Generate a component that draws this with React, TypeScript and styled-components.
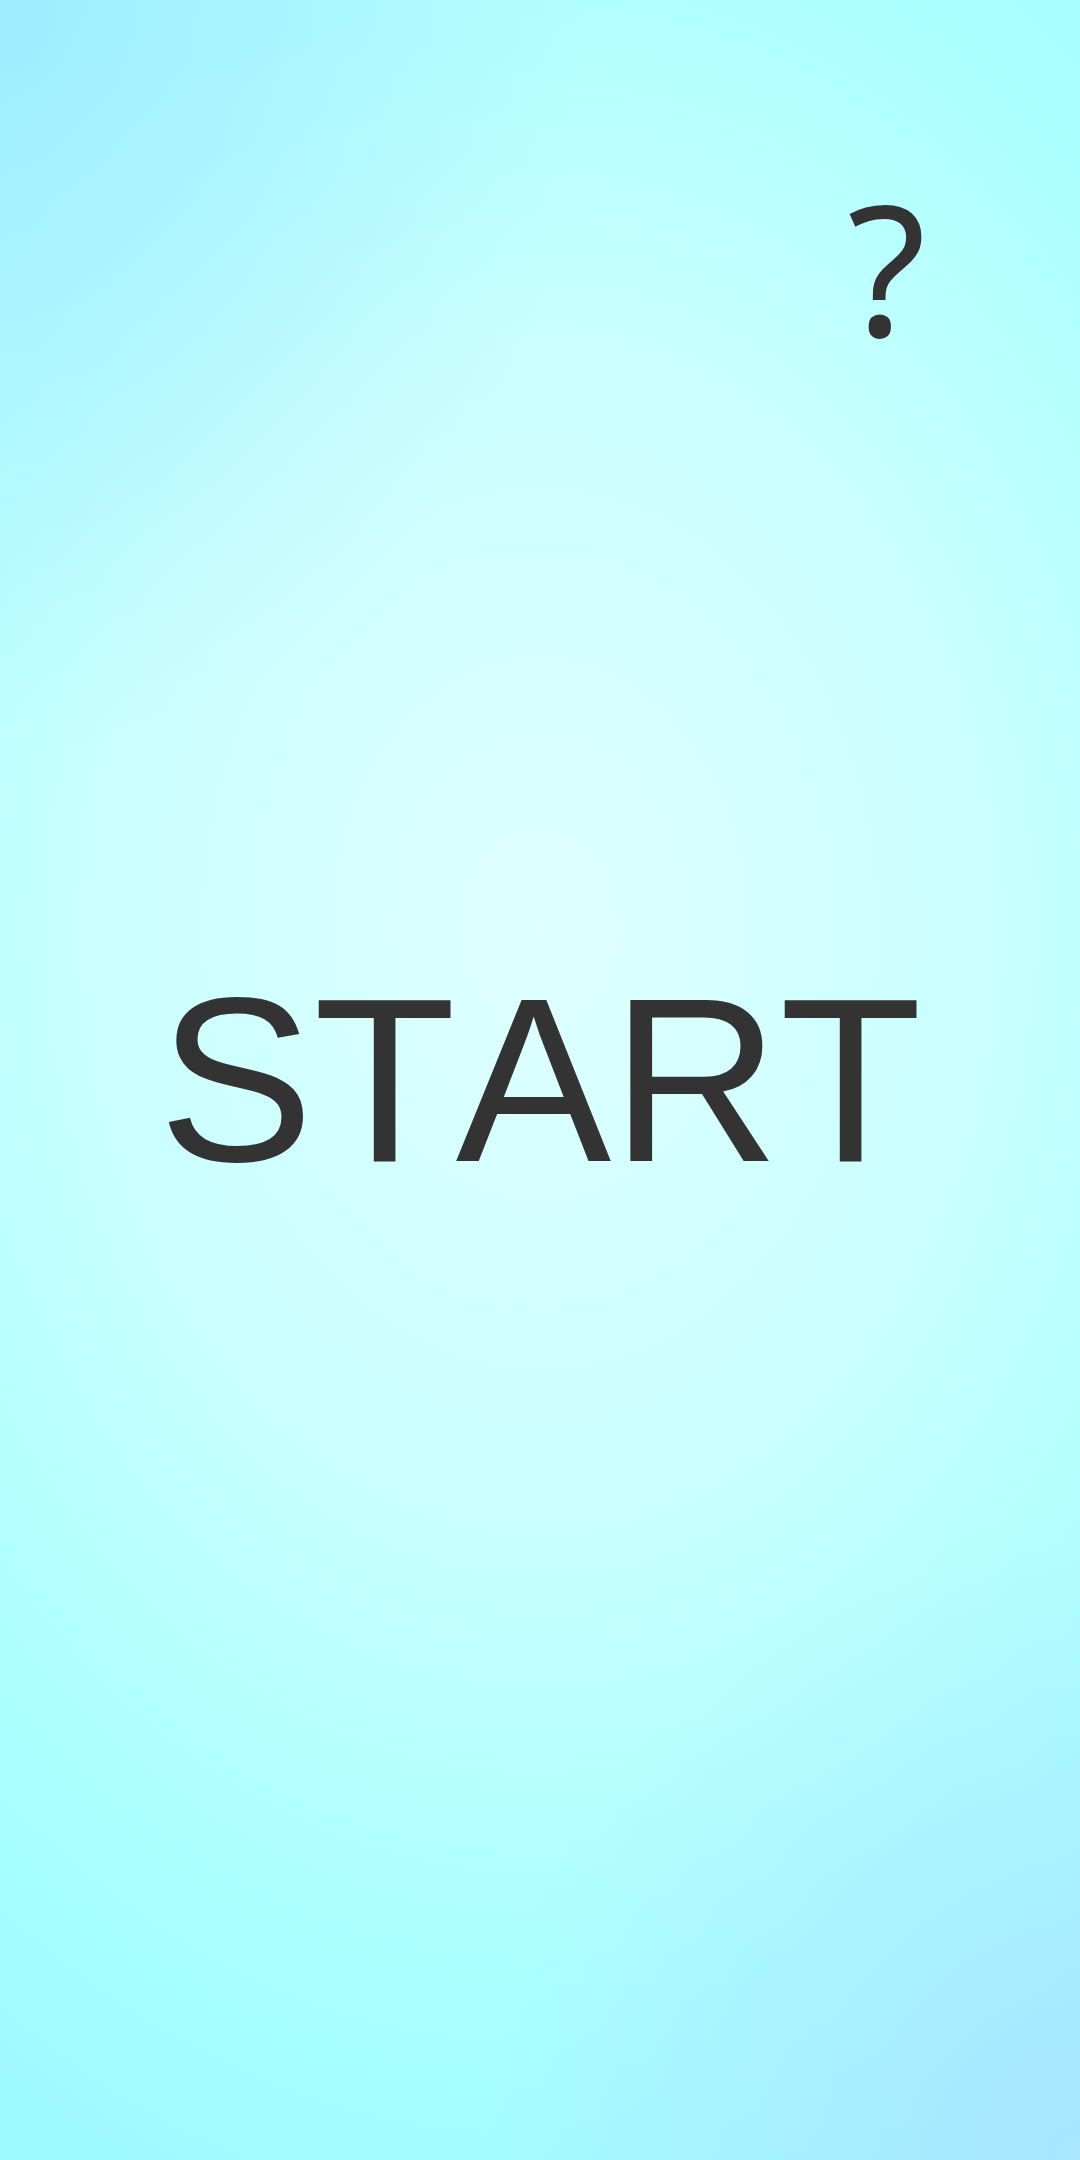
import React from "react";
import styled, { createGlobalStyle } from "styled-components";

const GlobalStyle = createGlobalStyle`
  html, body {
    margin: 0;
    padding: 0;
    height: 100%;
  }
  body {
    font-family: "Liberation Sans", Arial, sans-serif;
  }
  #root {
    min-height: 100vh;
  }
`;

const Screen = styled.div`
  position: relative;
  width: 100%;
  min-height: 100vh;
  display: flex;
  align-items: center;
  justify-content: center;
  overflow: hidden;
  background:
    radial-gradient(ellipse 55% 35% at 0% 0%, rgba(150, 220, 255, 0.5), rgba(150, 220, 255, 0) 100%),
    radial-gradient(ellipse 55% 30% at 100% 100%, rgba(175, 215, 255, 0.6), rgba(175, 215, 255, 0) 100%),
    radial-gradient(ellipse 95% 62% at 50% 43%, #e0ffff 0%, #c8ffff 45%, #a8ffff 80%, #9ffaff 100%);
`;

const HelpButton = styled.button`
  position: absolute;
  top: 176px;
  right: 154px;
  border: none;
  background: transparent;
  padding: 0;
  margin: 0;
  cursor: pointer;
  font-family: "Noto Sans", "Open Sans", sans-serif;
  font-size: 181px;
  line-height: 1;
  color: #333333;
`;

const StartButton = styled.button`
  border: none;
  background: transparent;
  padding: 0;
  margin: 0;
  cursor: pointer;
  font-family: "Liberation Sans", Arial, sans-serif;
  font-size: 233px;
  font-kerning: none;
  line-height: 1;
  color: #333333;
`;

export default function App() {
  return (
    <>
      <GlobalStyle />
      <Screen>
        <HelpButton aria-label="help">?</HelpButton>
        <StartButton>START</StartButton>
      </Screen>
    </>
  );
}
